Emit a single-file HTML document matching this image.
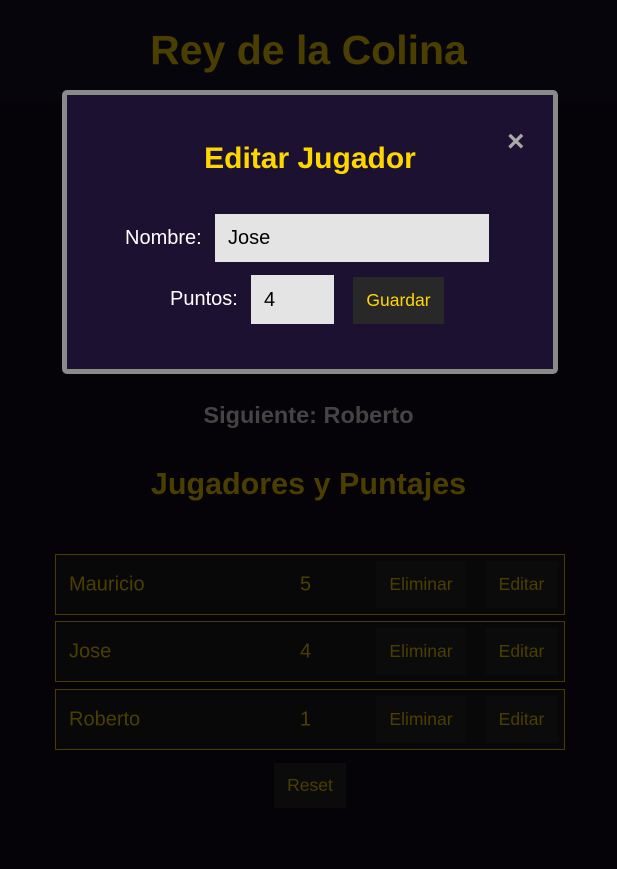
<!DOCTYPE html>
<html><head><style>
*{margin:0;padding:0;box-sizing:border-box}
body{width:617px;height:869px;background:#050307;font-family:"Liberation Sans",sans-serif;position:relative;overflow:hidden}
.a{position:absolute}
.hdr{left:0;top:0;width:617px;height:101px;background:#06050c}
.t{left:0;width:617px;text-align:center;font-weight:bold}
.row{left:55px;width:510px;height:61px;background:#080808;border:1px solid #4a3c00;color:#4a3f00;font-size:20px}
.row span{position:absolute;top:50%;transform:translateY(-50%)}
.btn{position:absolute;top:6px;height:47px;background:#0b0b0b;color:#4a3f00;font-size:17.5px;display:flex;align-items:center;justify-content:center}
</style></head><body>
<div class="a hdr"></div>
<div class="a t" style="top:27px;font-size:41px;color:#4a3e00">Rey de la Colina</div>
<div class="a t" style="top:402px;font-size:23.5px;color:#444">Siguiente: Roberto</div>
<div class="a t" style="top:467px;font-size:30.5px;color:#4a3f00">Jugadores y Puntajes</div>

<div class="a row" style="top:554px"><span style="left:13px">Mauricio</span><span style="left:244px">5</span><div class="btn" style="left:320px;width:90px">Eliminar</div><div class="btn" style="left:429px;width:73px">Editar</div></div>
<div class="a row" style="top:621px"><span style="left:13px">Jose</span><span style="left:244px">4</span><div class="btn" style="left:320px;width:90px">Eliminar</div><div class="btn" style="left:429px;width:73px">Editar</div></div>
<div class="a row" style="top:689px"><span style="left:13px">Roberto</span><span style="left:244px">1</span><div class="btn" style="left:320px;width:90px">Eliminar</div><div class="btn" style="left:429px;width:73px">Editar</div></div>
<div class="a" style="left:274px;top:763px;width:72px;height:45px;background:#0b0b0b;color:#4a3f00;font-size:17.5px;display:flex;align-items:center;justify-content:center">Reset</div>

<div class="a" style="left:62px;top:90px;width:496px;height:284px;background:#1c1130;border:5px solid #8a8a8a;border-radius:5px"></div>
<div class="a" style="left:507px;top:127px;font-size:30px;font-weight:bold;color:#a8a8a8;line-height:30px">×</div>
<div class="a" style="left:0;width:620px;top:142px;text-align:center;font-size:30px;font-weight:bold;color:#ffd700">Editar Jugador</div>
<div class="a" style="left:125px;top:227px;font-size:20px;color:#fff">Nombre:</div>
<div class="a" style="left:215px;top:214px;width:274px;height:48px;background:#e4e4e4;font-size:20px;color:#000;padding:13px 0 0 13px">Jose</div>
<div class="a" style="left:170px;top:288px;font-size:20px;color:#fff">Puntos:</div>
<div class="a" style="left:251px;top:275px;width:83px;height:49px;background:#e4e4e4;font-size:20px;color:#000;padding:14px 0 0 13px">4</div>
<div class="a" style="left:353px;top:277px;width:91px;height:47px;background:#282828;color:#ffd700;font-size:17.5px;display:flex;align-items:center;justify-content:center">Guardar</div>
</body></html>
